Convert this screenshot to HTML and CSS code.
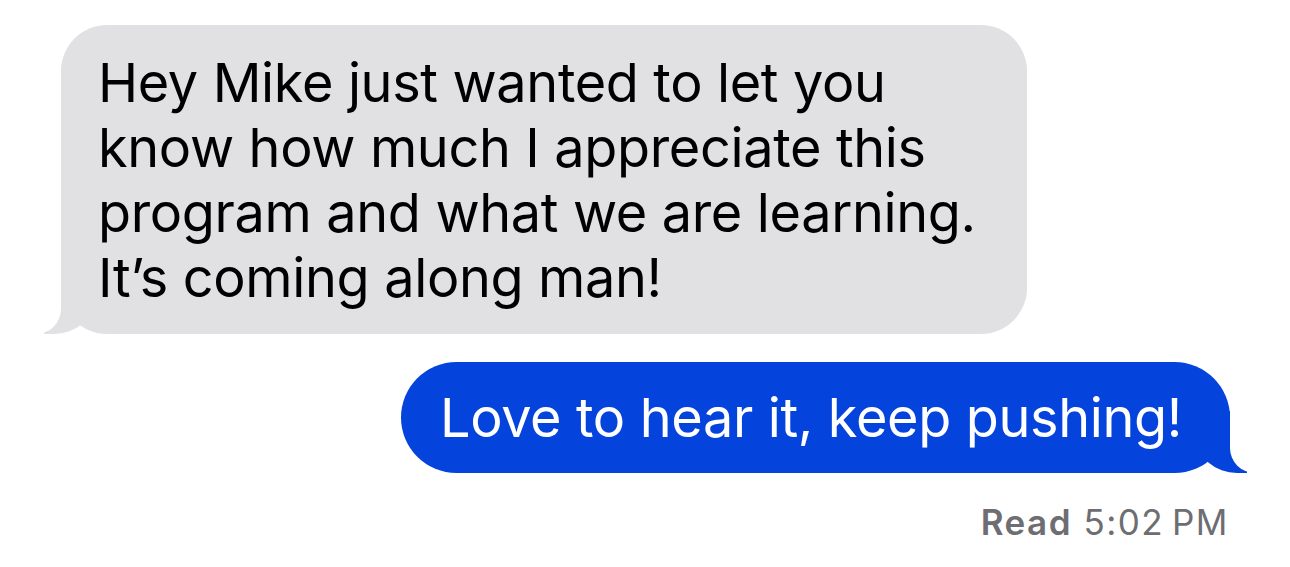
FILE: index.html
```html
<!DOCTYPE html>
<html lang="en">
<head>
    <meta charset="UTF-8">
    <meta name="viewport" content="width=device-width, initial-scale=1.0">
    <title>Messages</title>
    <link rel="stylesheet" href="styles.css">
</head>
<body>
    <div class="thread">
        <!-- Incoming message -->
        <div class="bubble them">
            Hey Mike just wanted to let you<br>
            know how much I appreciate this<br>
            program and what we are learning.<br>
            It’s coming along man!
        </div>

        <!-- Outgoing message -->
        <div class="bubble me">Love to hear it, keep pushing!</div>

        <div class="receipt"><b>Read</b> 5:02&#8201;PM</div>
    </div>
</body>
</html>
```

FILE: styles.css
```css
body {
    margin: 0;
    background: #fff;
    font-family: Inter, "Noto Sans", sans-serif;
}
.thread {
    display: flex;
    flex-direction: column;
    padding: 25px 60px 0 61px;
}
.bubble {
    position: relative;
    box-sizing: border-box;
    font-size: 54px;
    line-height: 65px;
    letter-spacing: -0.35px;
}
.them {
    align-self: flex-start;
    width: 966px;
    padding: 25px 30px 24px 37px;
    background: #e1e1e4;
    color: #000;
    border-radius: 46px;
}
.me {
    align-self: flex-end;
    width: 829px;
    margin-top: 28px;
    padding: 23px 30px 23px 39px;
    background: #0443dc;
    color: #fff;
    border-radius: 56px;
}

/* tails */
.bubble::before,
.bubble::after {
    content: "";
    position: absolute;
    bottom: 0;
    height: 62px;
}
.them::before {
    left: -17px;
    width: 50px;
    background: #e1e1e4;
    border-bottom-right-radius: 40px 35px;
}
.them::after {
    left: -65px;
    width: 65px;
    background: #fff;
    border-bottom-right-radius: 25px;
}
.me::before {
    right: -17px;
    width: 50px;
    background: #0443dc;
    border-bottom-left-radius: 40px 35px;
}
.me::after {
    right: -65px;
    width: 65px;
    background: #fff;
    border-bottom-left-radius: 25px;
}

.receipt {
    align-self: flex-end;
    margin-top: 29px;
    margin-right: 1px;
    font-size: 35px;
    line-height: 40px;
    letter-spacing: 1.5px;
    color: #6d6d72;
}
.receipt b {
    font-weight: 600;
}
```
